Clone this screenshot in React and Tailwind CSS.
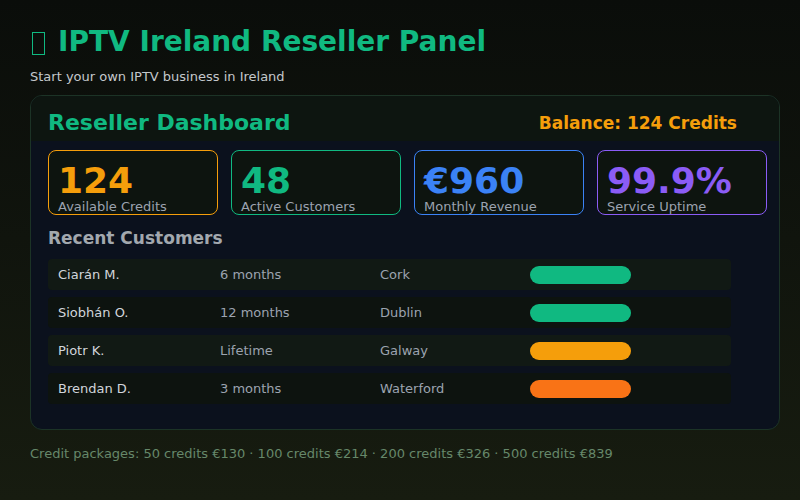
import React from 'react';

const STATS = [
  { value: '124', label: 'Available Credits', border: 'border-[#f59e0b]', text: 'text-[#f59e0b]' },
  { value: '48', label: 'Active Customers', border: 'border-[#10b981]', text: 'text-[#10b981]' },
  { value: '€960', label: 'Monthly Revenue', border: 'border-[#3b82f6]', text: 'text-[#3b82f6]' },
  { value: '99.9%', label: 'Service Uptime', border: 'border-[#8b5cf6]', text: 'text-[#8b5cf6]' },
];

const CUSTOMERS = [
  { name: 'Ciarán M.', plan: '6 months', city: 'Cork', bar: 'bg-[#10b981]', bg: 'bg-[#111914]' },
  { name: 'Siobhán O.', plan: '12 months', city: 'Dublin', bar: 'bg-[#10b981]', bg: 'bg-[#0d130f]' },
  { name: 'Piotr K.', plan: 'Lifetime', city: 'Galway', bar: 'bg-[#f59e0b]', bg: 'bg-[#111914]' },
  { name: 'Brendan D.', plan: '3 months', city: 'Waterford', bar: 'bg-[#f97316]', bg: 'bg-[#0d130f]' },
];

export default function App() {
  return (
    <div className="w-[800px] h-[500px] overflow-hidden bg-gradient-to-b from-[#0a0d0a] to-[#171c10] font-['DejaVu_Sans',sans-serif] px-[30px] pt-6">
      {/* Title – the icon glyph shows as an empty box */}
      <h1 className="flex items-center text-[28px] leading-[36px] font-bold text-[#10b981]">
        <span className="ml-[2px] mr-[13px] mt-[2px] w-[13px] h-[23px] border-[1.5px] border-[#10b981]" />
        IPTV Ireland Reseller Panel
      </h1>
      <p className="mt-[7px] text-[13px] leading-[20px] text-[#c4c8cc]">Start your own IPTV business in Ireland</p>

      {/* Card */}
      <div className="mt-[8px] w-[750px] h-[335px] rounded-xl border border-[#1c3326] bg-[#0b111d] overflow-hidden">
        <div className="h-[45px] pt-[7px] pl-[17px] pr-[42px] flex items-center justify-between bg-[#0d1510]">
          <h2 className="text-[22px] font-bold text-[#10b981]">Reseller Dashboard</h2>
          <span className="text-[17px] font-bold text-[#f59e0b] mt-[3px]">Balance: 124 Credits</span>
        </div>

        <div className="pl-[17px] pt-[9px]">
          <div className="flex gap-[13px]">
            {STATS.map((s) => (
              <div key={s.label} className={`w-[170px] h-[65px] rounded-lg border ${s.border} bg-[#0d140f] pt-[12px] px-[9px]`}>
                <div className={`text-[36px] leading-[35px] font-bold ${s.text}`}>{s.value}</div>
                <div className="mt-[1px] text-[13px] leading-[16px] text-[#9ca3af]">{s.label}</div>
              </div>
            ))}
          </div>

          <h3 className="mt-[12px] text-[17px] leading-[22px] font-bold text-[#a2a8ae]">Recent Customers</h3>

          <div className="mt-[10px] w-[683px] flex flex-col gap-[7px]">
            {CUSTOMERS.map((c) => (
              <div key={c.name} className={`h-[31px] rounded ${c.bg} flex items-center pl-[10px] text-[13px]`}>
                <span className="w-[162px] text-[#d1d5db]">{c.name}</span>
                <span className="w-[160px] text-[#9ca3af]">{c.plan}</span>
                <span className="w-[150px] text-[#9ca3af]">{c.city}</span>
                <span className={`w-[101px] h-[18px] rounded-full ${c.bar}`} />
              </div>
            ))}
          </div>
        </div>
      </div>

      <p className="mt-[15px] text-[13px] leading-[18px] text-[#66886a]">
        Credit packages: 50 credits €130 · 100 credits €214 · 200 credits €326 · 500 credits €839
      </p>
    </div>
  );
}
